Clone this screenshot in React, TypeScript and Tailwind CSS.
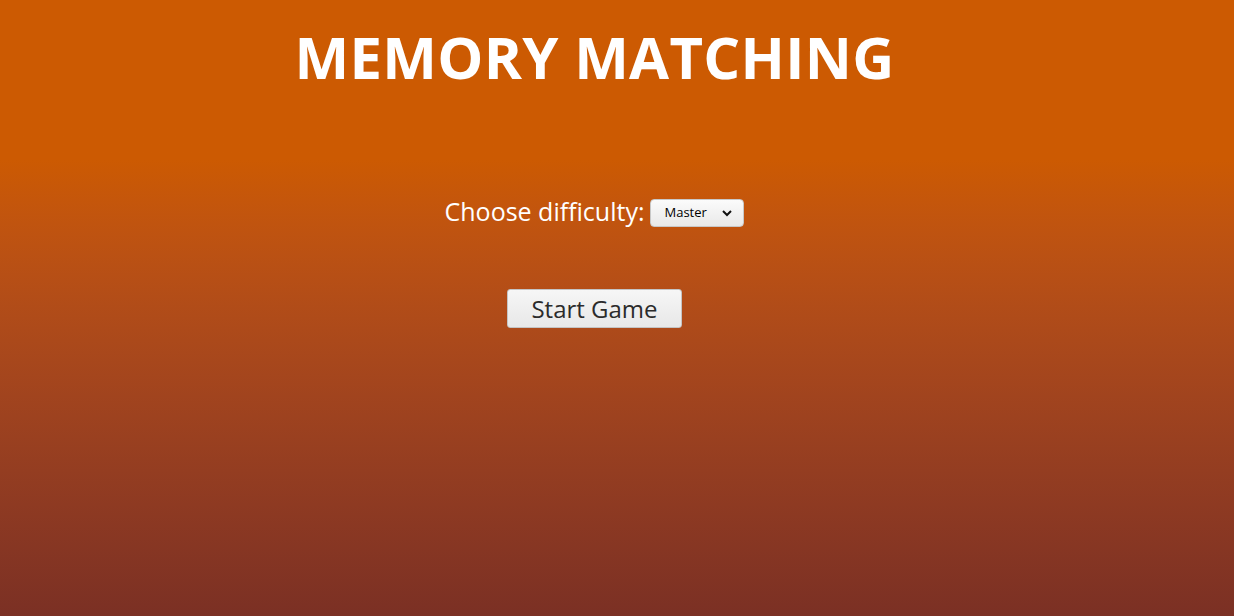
import { useState } from 'react';

export default function App() {
  const [level, setLevel] = useState('Master');

  return (
    <div className="min-h-screen w-full bg-linear-to-b from-[#cc5a02] from-[26%] to-[#7b3024] font-['Open_Sans','Noto_Sans',sans-serif] text-white">
      <div className="w-[1189px] flex flex-col items-center">
        <h1 className="mt-[23px] text-[58px] leading-[68px] font-bold tracking-[0.3px]">MEMORY MATCHING</h1>
        <div className="mt-[104px] flex items-center gap-[6px]">
          <label htmlFor="level" className="text-[25px] leading-[30px]">
            Choose difficulty:
          </label>
          <div className="relative mt-[4px]">
            <select
              id="level"
              value={level}
              onChange={(e) => setLevel(e.target.value)}
              className="appearance-none w-[94px] h-[28px] pl-[13px] text-[13px] text-black rounded-[4px] border border-[#c8c8c8] bg-linear-to-b from-[#fbfbfb] to-[#e9e9e9] outline-none"
            >
              <option>Easy</option>
              <option>Medium</option>
              <option>Hard</option>
              <option>Master</option>
            </select>
            <svg
              className="pointer-events-none absolute right-[12px] top-[11px]"
              width="10"
              height="7"
              viewBox="0 0 10 7"
              fill="none"
              stroke="#111"
              strokeWidth="2"
            >
              <path d="M1 1l4 4 4-4" />
            </svg>
          </div>
        </div>
        <button className="mt-[62px] w-[175px] h-[39px] rounded-[3px] border border-[#c4c4c4] bg-linear-to-b from-[#f6f6f6] to-[#e8e8e8] text-[24px] text-[#2b2b2b]">
          Start Game
        </button>
      </div>
    </div>
  );
}
